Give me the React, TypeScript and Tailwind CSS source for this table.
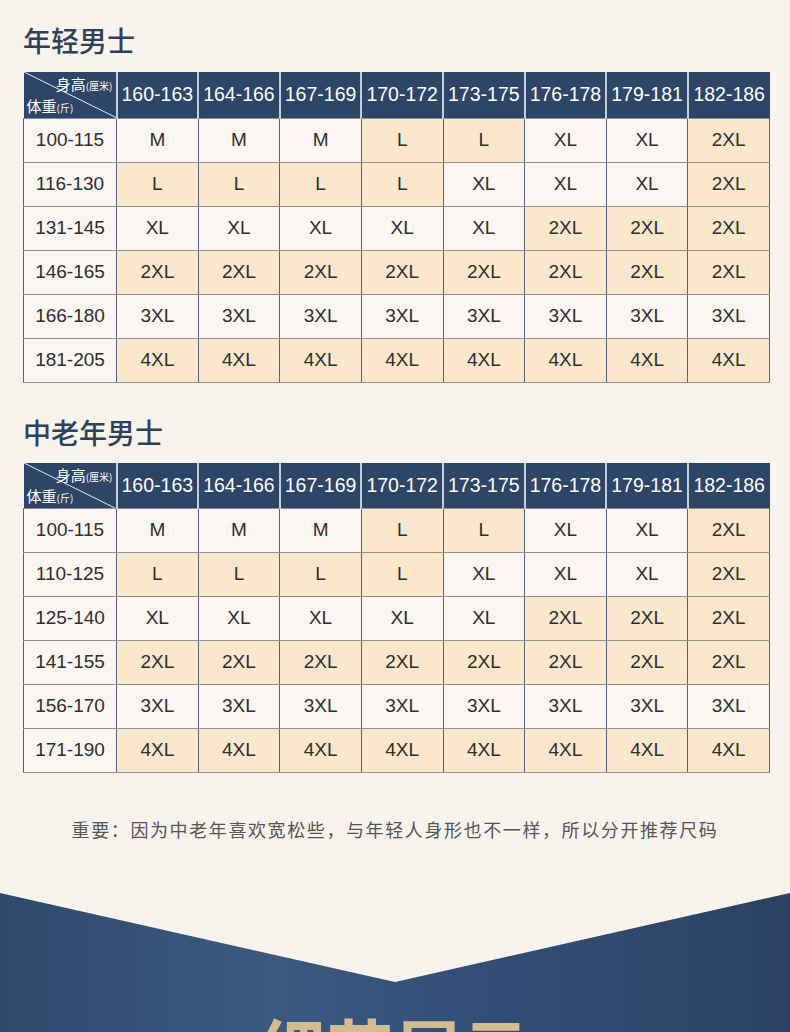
import React from 'react'

const heights = ['160-163', '164-166', '167-169', '170-172', '173-175', '176-178', '179-181', '182-186']

const young: [string, string[]][] = [
  ['100-115', ['M', 'M', 'M', 'L', 'L', 'XL', 'XL', '2XL']],
  ['116-130', ['L', 'L', 'L', 'L', 'XL', 'XL', 'XL', '2XL']],
  ['131-145', ['XL', 'XL', 'XL', 'XL', 'XL', '2XL', '2XL', '2XL']],
  ['146-165', ['2XL', '2XL', '2XL', '2XL', '2XL', '2XL', '2XL', '2XL']],
  ['166-180', ['3XL', '3XL', '3XL', '3XL', '3XL', '3XL', '3XL', '3XL']],
  ['181-205', ['4XL', '4XL', '4XL', '4XL', '4XL', '4XL', '4XL', '4XL']],
]

const senior: [string, string[]][] = [
  ['100-115', ['M', 'M', 'M', 'L', 'L', 'XL', 'XL', '2XL']],
  ['110-125', ['L', 'L', 'L', 'L', 'XL', 'XL', 'XL', '2XL']],
  ['125-140', ['XL', 'XL', 'XL', 'XL', 'XL', '2XL', '2XL', '2XL']],
  ['141-155', ['2XL', '2XL', '2XL', '2XL', '2XL', '2XL', '2XL', '2XL']],
  ['156-170', ['3XL', '3XL', '3XL', '3XL', '3XL', '3XL', '3XL', '3XL']],
  ['171-190', ['4XL', '4XL', '4XL', '4XL', '4XL', '4XL', '4XL', '4XL']],
]

// L / 2XL / 4XL cells get the tan fill
const tan = ['L', '2XL', '4XL']

const cjk = { fontFamily: '"Noto Sans CJK SC", "Noto Sans", sans-serif' }

const SizeTable = ({ rows }: { rows: [string, string[]][] }) => {
  return (
    <table
      className="w-[747px] table-fixed border-collapse text-[#2e2e2e]"
      style={{ fontFamily: '"Liberation Sans", Arial, sans-serif' }}
    >
      <colgroup>
        <col className="w-[93px]" />
        {heights.map((h) => (
          <col key={h} />
        ))}
      </colgroup>
      <thead>
        <tr className="h-[46px] bg-[#2d4566] text-white">
          <th className="relative p-0 font-normal">
            <svg className="absolute inset-0 h-full w-full" preserveAspectRatio="none" viewBox="0 0 93 46">
              <line x1="0" y1="0" x2="93" y2="46" stroke="#e8edf3" strokeWidth="1" />
            </svg>
            <div className="absolute right-[3px] top-[4px] text-[15px] leading-none" style={cjk}>
              身高<span className="text-[10px]">(厘米)</span>
            </div>
            <div className="absolute bottom-[5px] left-[3px] text-[15px] leading-none" style={cjk}>
              体重<span className="text-[10px]">(斤)</span>
            </div>
          </th>
          {heights.map((h) => (
            <th key={h} className="border-l-2 border-l-[#c6cdd8] p-0 text-[19.5px] font-normal">
              {h}
            </th>
          ))}
        </tr>
      </thead>
      <tbody>
        {rows.map(([w, sizes]) => (
          <tr key={w} className="h-[44px]">
            <td className="border border-x-[#55607a] border-y-[#8f8f8f] bg-[#fbf6f1] p-0 text-center text-[19px]">
              {w}
            </td>
            {sizes.map((s, i) => (
              <td
                key={i}
                className={`border border-x-[#55607a] border-y-[#8f8f8f] p-0 text-center text-[19px] ${
                  tan.includes(s) ? 'bg-[#fbe8cc]' : 'bg-[#fbf6f1]'
                }`}
              >
                {s}
              </td>
            ))}
          </tr>
        ))}
      </tbody>
    </table>
  )
}

export default function App() {
  return (
    <div className="min-h-[1200px] w-[790px] overflow-hidden bg-[#f9f3ee]">
      <div className="px-[23px] pt-[26px]">
        <h2 className="text-[28px] leading-none font-medium text-[#2f4059]" style={cjk}>
          年轻男士
        </h2>
        <div className="mt-[18px]">
          <SizeTable rows={young} />
        </div>

        <h2 className="mt-[35px] text-[28px] leading-none font-medium text-[#2f4059]" style={cjk}>
          中老年男士
        </h2>
        <div className="mt-[17px]">
          <SizeTable rows={senior} />
        </div>
      </div>

      <p className="mt-[47px] text-center text-[18px] leading-none tracking-[1.6px] text-[#555]" style={cjk}>
        重要：因为中老年喜欢宽松些，与年轻人身形也不一样，所以分开推荐尺码
      </p>

      {/* navy band with the V notch */}
      <div className="mt-[55px] h-[260px] bg-[linear-gradient(90deg,#2f496c_0%,#3b5a80_35%,#34507a_55%,#2b4262_100%)] pt-[120px] [clip-path:polygon(0_0,50%_89px,100%_0,100%_100%,0_100%)]">
        <div className="text-center text-[66px] leading-none font-bold tracking-[2px] text-[#d5bb90]" style={cjk}>
          细节展示
        </div>
      </div>
    </div>
  )
}
